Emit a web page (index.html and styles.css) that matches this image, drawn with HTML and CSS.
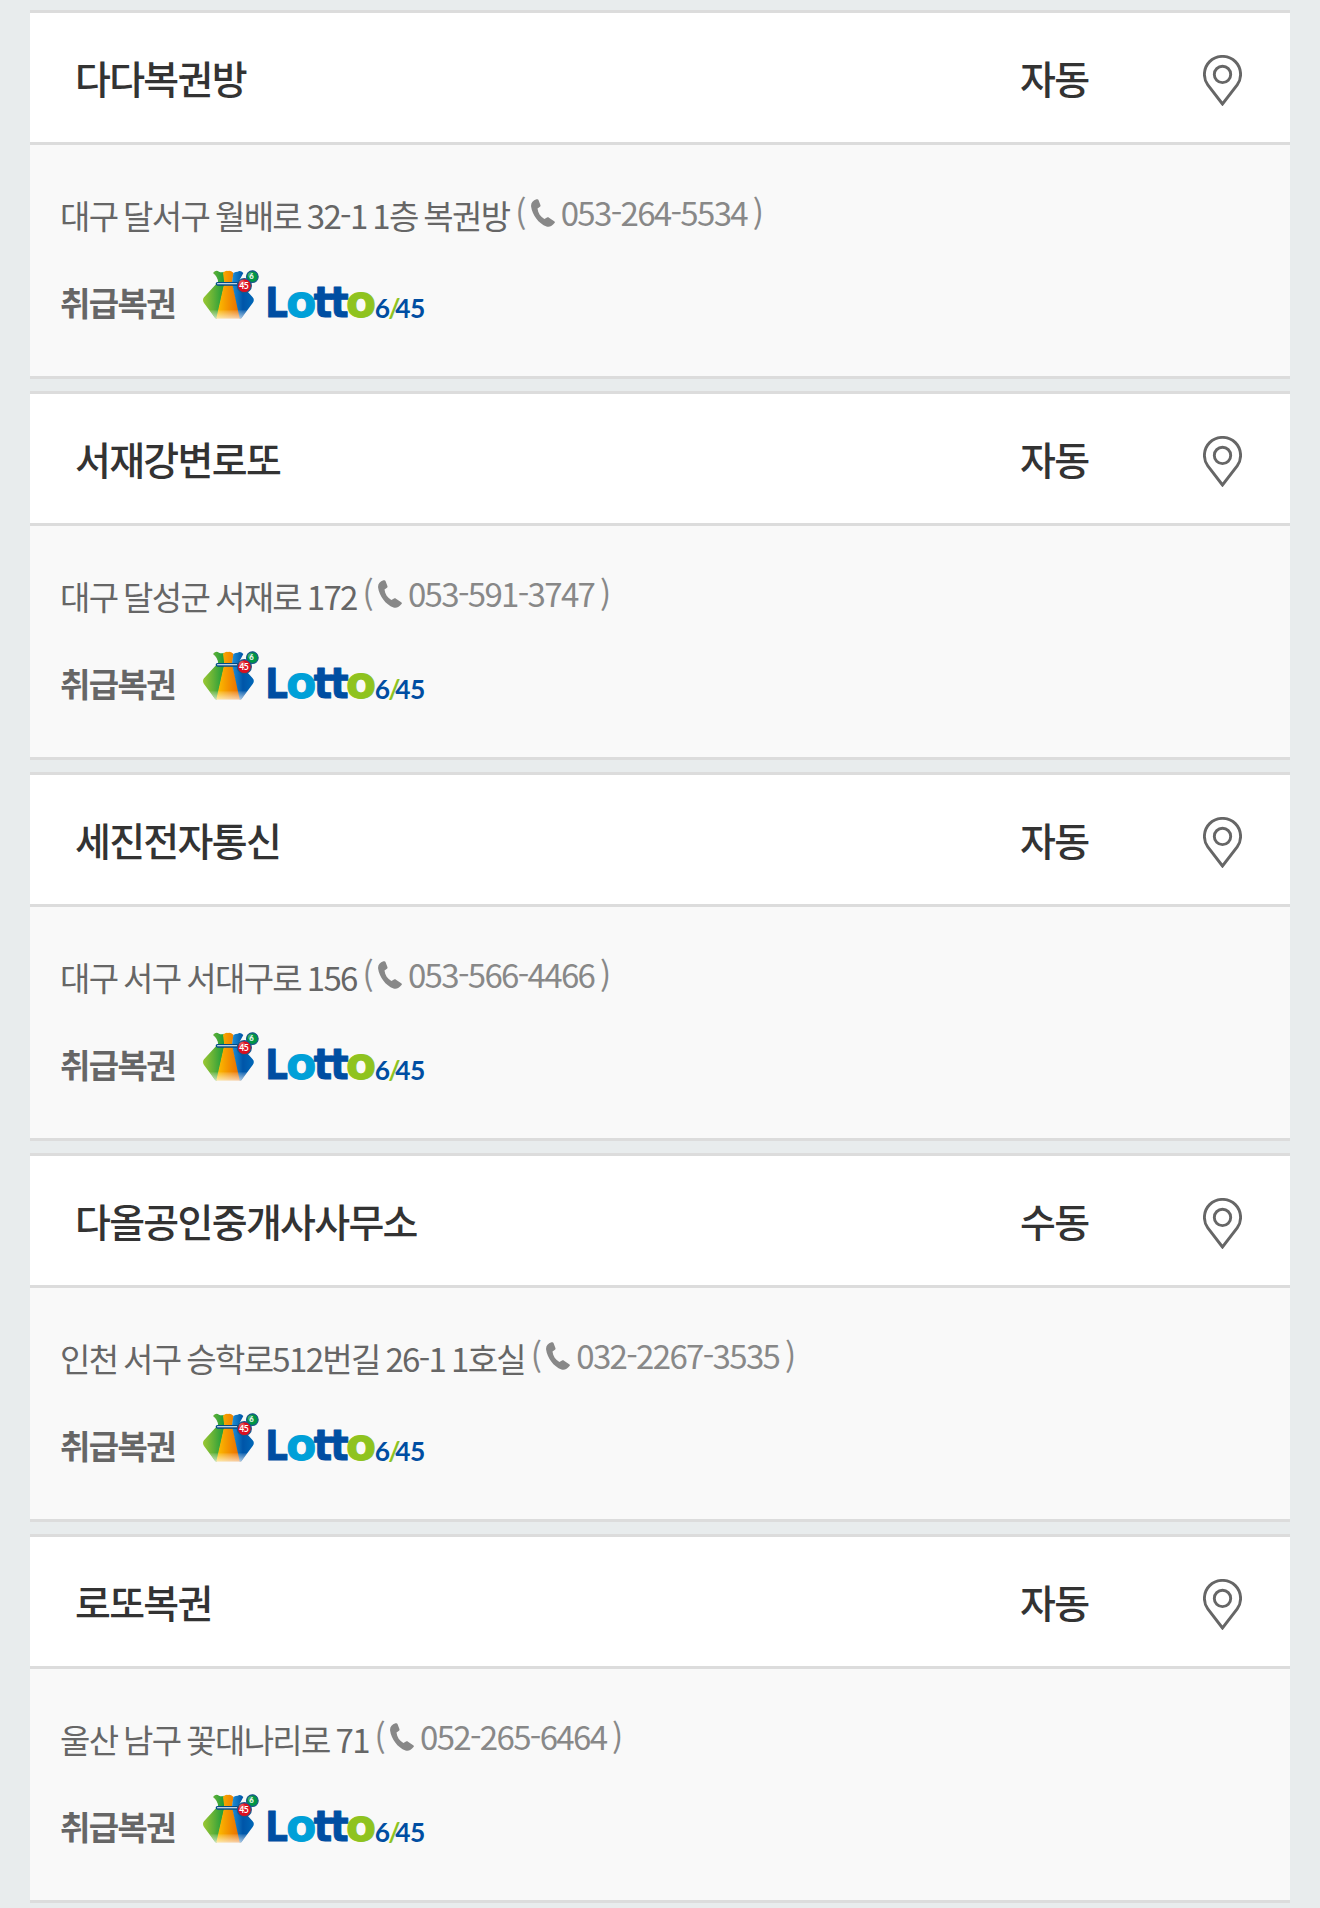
FILE: index.html
```html
<!DOCTYPE html>
<html lang="ko">
<head>
    <meta charset="UTF-8">
    <title>판매점</title>
    <link rel="stylesheet" href="styles.css">
    <script src="script.js" defer></script>
</head>
<body>
    <!-- 공통 아이콘 -->
    <svg class="symbols" width="0" height="0">
        <defs>
            <linearGradient id="green" x1="0" x2="1">
                <stop offset="0" stop-color="#9bc832"/>
                <stop offset="0.5" stop-color="#5fb037"/>
                <stop offset="1" stop-color="#169b3b"/>
            </linearGradient>
            <linearGradient id="orange" x1="0" x2="1">
                <stop offset="0" stop-color="#fdc300"/>
                <stop offset="0.5" stop-color="#f39200"/>
                <stop offset="1" stop-color="#e86a00"/>
            </linearGradient>
            <linearGradient id="blue" x1="0" x2="1">
                <stop offset="0" stop-color="#1f8fd6"/>
                <stop offset="0.5" stop-color="#0055a8"/>
                <stop offset="1" stop-color="#0068b8"/>
            </linearGradient>
            <linearGradient id="shine" x1="0" y1="0" x2="0" y2="1">
                <stop offset="0" stop-color="#fff" stop-opacity="0.12"/>
                <stop offset="1" stop-color="#fff" stop-opacity="0.65"/>
            </linearGradient>
        </defs>
        <symbol id="pin" viewBox="0 0 39 51">
            <path d="M19.5 49 L4.8 29.8 C2.6 26.8 1.4 23.3 1.4 19.4 C1.4 9.3 9.3 1.4 19.5 1.4 S37.6 9.3 37.6 19.4 C37.6 23.3 36.4 26.8 34.2 29.8 Z"/>
            <circle cx="19.5" cy="19.4" r="8.2"/>
        </symbol>
        <symbol id="tel" viewBox="0 0 24 28">
            <path d="M5.5 .3 C6.5 -.1 7.2 .2 7.5 1.1 L9.4 6 C9.7 6.9 9.4 7.6 8.6 8.1 L6.5 9.6 C7 14.3 9.5 17.8 13.4 20 L16 18.6 C16.7 18.2 17.4 18.2 18 18.7 L23.2 22.2 C24 22.7 24.1 23.4 23.5 24.1 C21.2 27 18.4 28.5 15.5 27.5 C7.5 24.6 1.3 16 .1 7.5 C-.3 4.2 1.8 1.6 5.5 .3 Z"/>
        </symbol>
    </svg>

    <ul class="store_list">
        <li class="store">
            <div class="store_head">
                <strong class="name">다다복권방</strong>
                <span class="type">자동</span>
                <a class="map"><svg><use href="#pin"/></svg></a>
            </div>
            <div class="store_body">
                <p class="addr">대구 달서구 월배로 32-1 1층 복권방 <span class="phone">(<svg><use href="#tel"/></svg>053-264-5534 )</span></p>
                <p class="kind"><b>취급복권</b>
                    <svg class="logo" viewBox="36 45 669 150">
                        <path fill="url(#green)" d="M69 54 Q78 43 87 50 Q94 54 101 50 L104 85 L81 190 L76 190 L42 144 Q36 135 42 127 L84 81 Q84 66 69 54 Z"/>
                        <path fill="url(#orange)" d="M99 53 Q107 46 114 48 Q122 46 130 53 L127 84 L152 190 L79 190 L103 84 Z"/>
                        <path fill="url(#blue)" d="M130 54 Q137 50 143 50 Q151 44 160 54 L146 80 L188 127 Q195 135 188 144 L154 190 L149 190 L126 84 Z"/>
                        <path fill="url(#shine)" d="M59 166 H172 L154 190 H76 Z"/>
                        <rect x="79" y="83" width="66" height="7" rx="3.5" fill="#fff" stroke="#004b87" stroke-width="4"/>
                        <circle cx="187" cy="65" r="17.5" fill="#009645" stroke="#17568c" stroke-width="3.5"/>
                        <circle cx="182" cy="60" r="8" fill="#7cc68c" opacity=".5"/>
                        <circle cx="163" cy="92" r="21" fill="#dc0f20" stroke="#17568c" stroke-width="3.5"/>
                        <circle cx="156" cy="84" r="9" fill="#f48a7c" opacity=".5"/>
                        <text class="ball" x="178" y="73" font-size="23">6</text>
                        <text class="ball" x="148" y="101" font-size="26" textLength="28">45</text>
                        <g class="logo_text">
                            <text fill="#004ea2" stroke="#004ea2" x="226" y="187" font-size="124" textLength="68" lengthAdjust="spacingAndGlyphs">L</text>
                            <text fill="#00a0d8" stroke="#00a0d8" x="289" y="187" font-size="131">o</text>
                            <text fill="#004ea2" stroke="#004ea2" x="371" y="187" font-size="129" textLength="55" lengthAdjust="spacingAndGlyphs">t</text>
                            <text fill="#004ea2" stroke="#004ea2" x="421" y="187" font-size="129" textLength="55" lengthAdjust="spacingAndGlyphs">t</text>
                            <text fill="#8fc31f" stroke="#8fc31f" x="468" y="187" font-size="131">o</text>
                        </g>
                        <g class="logo_num">
                            <text fill="#004ea2" x="554" y="188">6</text>
                            <text fill="#8fc31f" x="595" y="188">/</text>
                            <text fill="#004ea2" x="616 660" y="188">45</text>
                        </g>
                    </svg>
                </p>
            </div>
        </li>
        <li class="store">
            <div class="store_head">
                <strong class="name">서재강변로또</strong>
                <span class="type">자동</span>
                <a class="map"><svg><use href="#pin"/></svg></a>
            </div>
            <div class="store_body">
                <p class="addr">대구 달성군 서재로 172 <span class="phone">(<svg><use href="#tel"/></svg>053-591-3747 )</span></p>
                <p class="kind"><b>취급복권</b></p>
            </div>
        </li>
        <li class="store">
            <div class="store_head">
                <strong class="name">세진전자통신</strong>
                <span class="type">자동</span>
                <a class="map"><svg><use href="#pin"/></svg></a>
            </div>
            <div class="store_body">
                <p class="addr">대구 서구 서대구로 156 <span class="phone">(<svg><use href="#tel"/></svg>053-566-4466 )</span></p>
                <p class="kind"><b>취급복권</b></p>
            </div>
        </li>
        <li class="store">
            <div class="store_head">
                <strong class="name">다올공인중개사사무소</strong>
                <span class="type">수동</span>
                <a class="map"><svg><use href="#pin"/></svg></a>
            </div>
            <div class="store_body">
                <p class="addr">인천 서구 승학로512번길 26-1 1호실 <span class="phone">(<svg><use href="#tel"/></svg>032-2267-3535 )</span></p>
                <p class="kind"><b>취급복권</b></p>
            </div>
        </li>
        <li class="store">
            <div class="store_head">
                <strong class="name">로또복권</strong>
                <span class="type">자동</span>
                <a class="map"><svg><use href="#pin"/></svg></a>
            </div>
            <div class="store_body">
                <p class="addr">울산 남구 꽃대나리로 71 <span class="phone">(<svg><use href="#tel"/></svg>052-265-6464 )</span></p>
                <p class="kind"><b>취급복권</b></p>
            </div>
        </li>
    </ul>
</body>
</html>
```

FILE: script.js
```js
// 첫 번째 로고를 나머지 판매점에도 넣는다
var logo = document.querySelector('.logo');
var kinds = document.querySelectorAll('.kind');

for (var i = 1; i < kinds.length; i++) {
    kinds[i].appendChild(logo.cloneNode(true));
}
```

FILE: styles.css
```css
* {
    box-sizing: border-box;
}

body {
    margin: 0;
    background: #e8eced;
    font-family: "Noto Sans CJK KR", sans-serif;
    font-size: 33px;
    letter-spacing: -1.65px;
    color: #666;
}

.symbols {
    display: block;
}

.store_list {
    display: flex;
    flex-direction: column;
    gap: 12px;
    margin: 0;
    padding: 10px 30px 0;
    list-style: none;
}

.store {
    height: 369px;
    border-top: 3px solid #dcdcdc;
    border-bottom: 3px solid #dcdcdc;
    background: #f9f9f9;
}

.store_head {
    display: flex;
    align-items: center;
    height: 132px;
    padding: 0 48px 2px 45px;
    border-bottom: 3px solid #dcdcdc;
    background: #fff;
    font-size: 39px;
    letter-spacing: -1.7px;
    color: #333;
}

.name {
    flex: 1;
    font-weight: 500;
}

.type {
    width: 183px;
    font-weight: 500;
}

.map {
    padding-top: 8px;
}

.map svg {
    display: block;
    width: 39px;
    height: 51px;
    fill: none;
    stroke: #666;
    stroke-width: 2.9px;
}

.store_body {
    padding: 46px 30px 0;
}

.addr {
    margin: 0;
    line-height: 48px;
    word-spacing: -1.9px;
    white-space: nowrap;
}

.phone {
    position: relative;
    top: -3px;
    color: #888;
}

.phone svg {
    width: 24px;
    height: 28px;
    margin: 0 6px 0 6px;
    vertical-align: -1px;
    fill: #888;
}

.kind {
    display: flex;
    align-items: flex-start;
    margin: 30px 0 0;
    line-height: 66px;
}

.kind b {
    width: 142px;
    font-weight: 700;
}

.logo {
    width: 223px;
    height: 50px;
    margin-top: 1px;
    overflow: visible;
}

.ball {
    font-family: Lato, sans-serif;
    font-weight: 700;
    letter-spacing: 0;
    fill: #fff;
}

.logo_text {
    font-family: "DejaVu Sans", sans-serif;
    font-weight: 700;
    letter-spacing: 0;
    stroke-width: 3px;
    stroke-linejoin: round;
}

.logo_num {
    font-family: Lato, sans-serif;
    font-size: 79px;
    font-weight: 700;
    letter-spacing: 0;
}
```
